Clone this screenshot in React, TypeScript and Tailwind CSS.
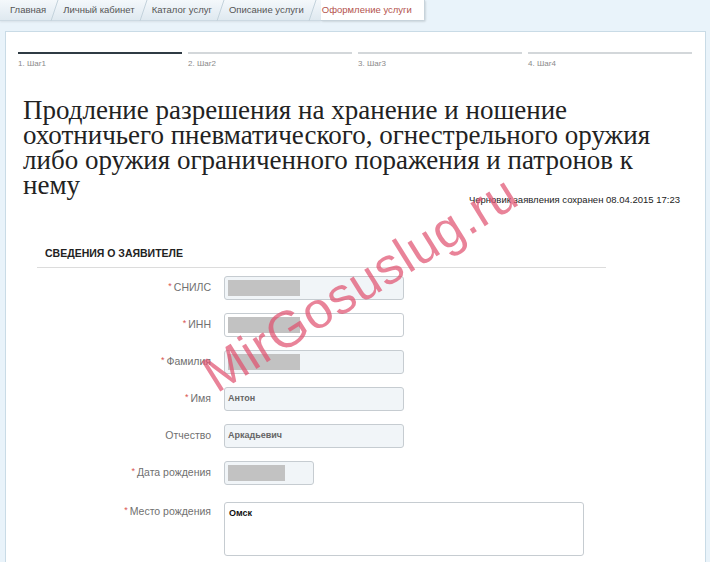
import React from 'react';

const tabs = ['Главная', 'Личный кабинет', 'Каталог услуг', 'Описание услуги'];
const steps = ['1. Шаг1', '2. Шаг2', '3. Шаг3', '4. Шаг4'];

const Slash: React.FC = () => (
  <svg width="17" height="21" viewBox="0 0 17 21" className="shrink-0">
    <line x1="5" y1="21" x2="12" y2="0" stroke="#c3d2dc" strokeWidth="1" />
  </svg>
);

const Label: React.FC<{ text: string; required?: boolean }> = ({ text, required = true }) => (
  <div className="w-[174px] shrink-0 text-right text-[10.5px] text-[#707070]">
    {required && <span className="text-[#d9534f] text-[9px] mr-[2px] align-top">*</span>}
    {text}
  </div>
);

const Redacted: React.FC<{ w?: string }> = ({ w = 'w-[72px]' }) => (
  <div className={`${w} h-[16px] bg-[#c2c2c2]`} />
);

const Field: React.FC<{ children?: React.ReactNode; white?: boolean; width?: string }> = ({
  children,
  white,
  width = 'w-[180px]',
}) => (
  <div
    className={`${width} h-[24px] rounded-[3px] border border-[#c6ccd1] ${
      white ? 'bg-white' : 'bg-[#f1f5f8]'
    } flex items-center px-[3px] text-[9px] font-bold text-[#666]`}
  >
    {children}
  </div>
);

const Row: React.FC<{ label: string; required?: boolean; children: React.ReactNode }> = ({
  label,
  required,
  children,
}) => (
  <div className="flex items-center gap-[13px]">
    <Label text={label} required={required} />
    {children}
  </div>
);

export default function App() {
  return (
    <div
      className="relative w-[710px] h-[562px] overflow-hidden bg-[#e9f3fa]"
      style={{ fontFamily: '"Liberation Sans", Arial, sans-serif' }}
    >
      {/* breadcrumbs */}
      <div className="flex items-stretch h-[21px] text-[9.5px] text-[#555]">
        <div className="flex items-center bg-gradient-to-b from-[#f4f8fb] to-[#dfe9f0] border-b border-[#ccd9e2] shadow-[0_1px_2px_rgba(0,0,0,0.08)]">
          {tabs.map((t, i) => (
            <React.Fragment key={t}>
              <span className={i === 0 ? 'pl-[10px]' : ''}>{t}</span>
              <Slash />
            </React.Fragment>
          ))}
        </div>
        <div className="flex items-center pl-[1px] pr-[12px] bg-white text-[#b4534d] border-b border-r border-[#c7d3db] rounded-br-[2px] shadow-[1px_1px_2px_rgba(0,0,0,0.12)]">
          Оформление услуги
        </div>
      </div>

      {/* panel */}
      <div className="mt-[10px] ml-[5px] w-[701px] h-[600px] bg-white border border-[#c9dbe6]">
        {/* steps */}
        <div className="flex gap-[6px] px-[12px] pt-[20px]">
          {steps.map((s, i) => (
            <div key={s} className="w-[164px]">
              <div className={i === 0 ? 'h-[2px] bg-[#2f3b44]' : 'h-[2px] bg-[#d3d7da]'} />
              <div className="mt-[4px] text-[8px] text-[#8a8a8a]">{s}</div>
            </div>
          ))}
        </div>

        {/* title */}
        <h1
          className="mt-[28px] pl-[17px] w-[690px] text-[27px] leading-[25px] text-[#222] whitespace-nowrap"
          style={{ fontFamily: '"Liberation Serif", "DejaVu Serif", serif' }}
        >
          Продление разрешения на хранение и ношение
          <br />
          охотничьего пневматического, огнестрельного оружия
          <br />
          либо оружия ограниченного поражения и патронов к
          <br />
          нему
        </h1>
        <div className="-mt-[5px] pr-[25px] text-right text-[9.5px] text-[#222]">
          Черновик заявления сохранен 08.04.2015 17:23
        </div>

        {/* applicant section */}
        <div className="ml-[31px] w-[569px] mt-[39px]">
          <div className="pl-[8px] pb-[5px] text-[10.5px] font-bold text-[#222] border-b border-[#dcdcdc]">
            СВЕДЕНИЯ О ЗАЯВИТЕЛЕ
          </div>
          <div className="flex flex-col gap-[13px] pt-[8px]">
            <Row label="СНИЛС">
              <Field>
                <Redacted />
              </Field>
            </Row>
            <Row label="ИНН">
              <Field white>
                <Redacted />
              </Field>
            </Row>
            <Row label="Фамилия">
              <Field>
                <Redacted />
              </Field>
            </Row>
            <Row label="Имя">
              <Field>Антон</Field>
            </Row>
            <Row label="Отчество" required={false}>
              <Field>Аркадьевич</Field>
            </Row>
            <Row label="Дата рождения">
              <Field width="w-[90px]">
                <Redacted w="w-[57px]" />
              </Field>
            </Row>
            <div className="flex items-start gap-[13px] mt-[4px]">
              <div className="pt-[2px]">
                <Label text="Место рождения" />
              </div>
              <div className="w-[360px] h-[54px] rounded-[3px] border border-[#c6ccd1] bg-white px-[4px] pt-[4px] text-[9px] font-bold text-[#111]">
                Омск
              </div>
            </div>
          </div>
        </div>
      </div>

      {/* watermark */}
      <div
        className="pointer-events-none absolute left-[145px] top-[258px] w-[430px] text-center text-[51px] leading-none text-[#e0506e] opacity-70 -rotate-[32deg] tracking-[1px]"
        style={{ fontFamily: '"Liberation Sans", Arial, sans-serif' }}
      >
        MirGosuslug.ru
      </div>
    </div>
  );
}
